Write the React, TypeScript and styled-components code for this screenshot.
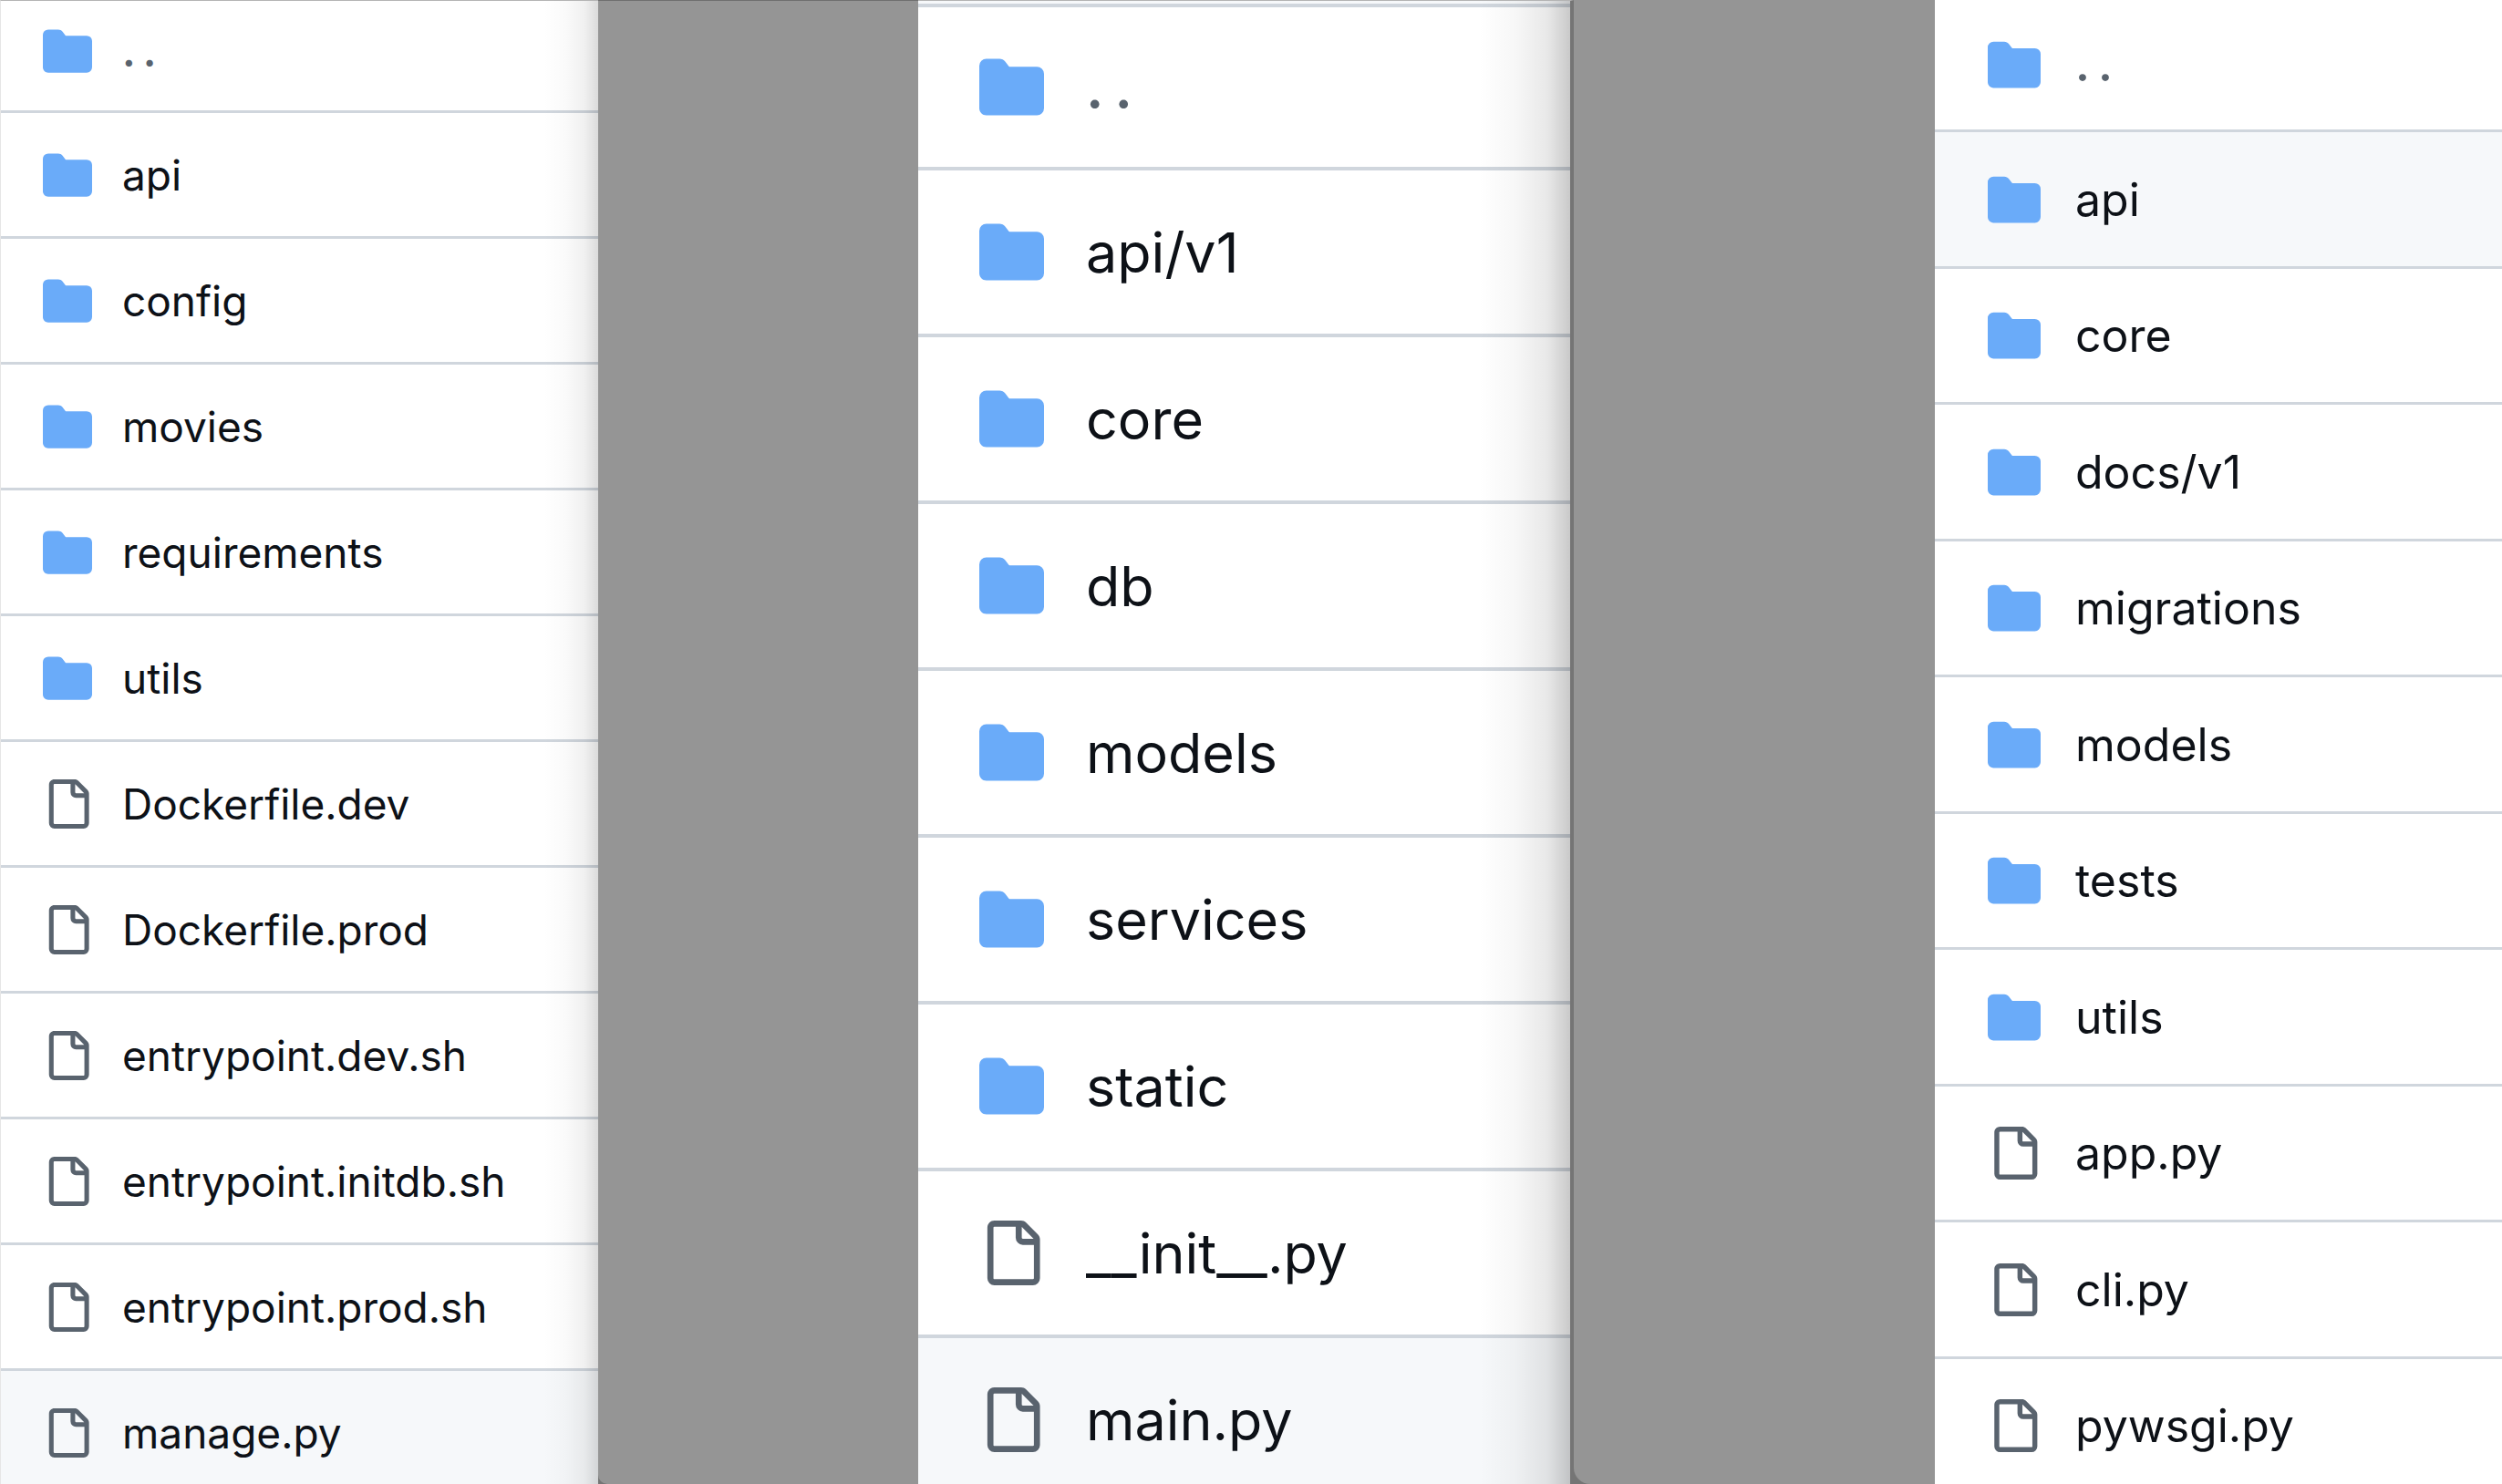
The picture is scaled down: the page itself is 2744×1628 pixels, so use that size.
import React from 'react';
import styled, { createGlobalStyle, css } from 'styled-components';

const GlobalStyle = createGlobalStyle`
  *, *::before, *::after { box-sizing: border-box; }
  body {
    margin: 0;
    background: #959595;
    font-family: Inter, "Liberation Sans", sans-serif;
    overflow: hidden;
  }
`;

type Size = 'small' | 'medium' | 'large';

const sizes = {
  small: { font: 46, line: 3, icon: 54, inset: 46, gap: 33, row: 138, evenRow: 138, first: 123, firstPad: 10, dots: 8 },
  medium: { font: 50, line: 3, icon: 58, inset: 58, gap: 38, row: 149, evenRow: 150, first: 145, firstPad: 0, dots: 9 },
  large: { font: 61, line: 4, icon: 71, inset: 67, gap: 46, row: 183, evenRow: 183, first: 179, firstPad: 0, dots: 12 },
};

const Board = styled.main`
  display: grid;
  grid-template-columns: 656fr 351fr 719fr 396fr 622fr;
  height: 100vh;
  overflow: hidden;
  background: #757575;
`;

const Panel = styled.section<{ $shade: 'none' | 'soft' | 'deep' }>`
  min-width: 0;
  overflow: hidden;
  background: #ffffff;
  position: relative;

  ${({ $shade }) =>
    $shade !== 'none' &&
    css`
      border-top: 1px solid #b4b4b4;
      &::after {
        content: '';
        position: absolute;
        inset: 0 0 0 auto;
        pointer-events: none;
        width: ${$shade === 'deep' ? 100 : 60}px;
        background: ${$shade === 'deep'
          ? 'linear-gradient(to right, rgba(0,0,0,0), rgba(0,0,0,0.03) 40%, rgba(0,0,0,0.09) 75%, rgba(0,0,0,0.21))'
          : 'linear-gradient(to right, rgba(0,0,0,0), rgba(0,0,0,0.02) 40%, rgba(0,0,0,0.06) 75%, rgba(0,0,0,0.14))'};
      }
    `}
  ${({ $shade }) => $shade === 'soft' && css`border-left: 1px solid #e6e6e6;`}
  ${({ $shade }) => $shade === 'deep' && css`border-right: 4px solid #757575;`}
`;

const Gap = styled.div<{ $topLine?: boolean }>`
  background: #959595;
  border-top: ${({ $topLine }) => ($topLine ? '1px solid #6f6f6f' : '0')};
  border-bottom-left-radius: ${({ $topLine }) => ($topLine ? 10 : 18)}px;
`;

const HeaderEdge = styled.div`
  height: 7px;
  background: #f6f8fa;
  border-bottom: 4px solid #d0d6dd;
`;

const List = styled.ul`
  list-style: none;
  margin: 0;
  padding: 0;
`;

const Row = styled.li<{ $size: Size; $active?: boolean }>`
  ${({ $size, $active }) => {
    const s = sizes[$size];
    return css`
      height: ${s.row}px;
      border-bottom: ${s.line}px solid #d0d6dd;
      background: ${$active ? '#f6f8fa' : 'transparent'};
      &:nth-child(even) { height: ${s.evenRow}px; }
      &:first-child { height: ${s.first}px; padding-bottom: ${s.firstPad}px; }
    `;
  }}
`;

const Entry = styled.a<{ $size: Size }>`
  display: flex;
  align-items: center;
  height: 100%;
  color: #0d1117;
  text-decoration: none;
  white-space: nowrap;
  padding-left: ${({ $size }) => sizes[$size].inset}px;
  gap: ${({ $size }) => sizes[$size].gap}px;
  font-size: ${({ $size }) => sizes[$size].font}px;
`;

const Icon = styled.svg<{ $size: Size; $color: string }>`
  flex: none;
  width: ${({ $size }) => sizes[$size].icon}px;
  height: ${({ $size }) => sizes[$size].icon}px;
  fill: ${({ $color }) => $color};
`;

const Dots = styled.span<{ $size: Size }>`
  display: flex;
  gap: ${({ $size }) => sizes[$size].dots}px;
  color: #59636e;
  font-weight: 600;
`;

const FolderIcon = ({ size }: { size: Size }) => (
  <Icon $size={size} $color="#6aabf9" viewBox="0 0 16 16" aria-hidden="true">
    <path d="M1.75 1A1.75 1.75 0 0 0 0 2.75v10.5C0 14.216.784 15 1.75 15h12.5A1.75 1.75 0 0 0 16 13.25v-8.5A1.75 1.75 0 0 0 14.25 3H7.5a.25.25 0 0 1-.2-.1l-.9-1.2C6.07 1.26 5.55 1 5 1H1.75Z" />
  </Icon>
);

const FileIcon = ({ size }: { size: Size }) => (
  <Icon $size={size} $color="#59636e" viewBox="0 0 16 16" aria-hidden="true">
    <path d="M2 1.75C2 .784 2.784 0 3.75 0h6.586c.464 0 .909.184 1.237.513l2.914 2.914c.329.328.513.773.513 1.237v9.586A1.75 1.75 0 0 1 13.25 16h-9.5A1.75 1.75 0 0 1 2 14.25Zm1.75-.25a.25.25 0 0 0-.25.25v12.5c0 .138.112.25.25.25h9.5a.25.25 0 0 0 .25-.25V6h-2.75A1.75 1.75 0 0 1 9 4.25V1.5Zm6.75.062V4.25c0 .138.112.25.25.25h2.688l-.011-.013-2.914-2.914-.013-.011Z" />
  </Icon>
);

interface TreeProps {
  size: Size;
  folders: string[];
  files: string[];
  active: string;
}

const Tree = ({ size, folders, files, active }: TreeProps) => (
  <List>
    <Row $size={size}>
      <Entry href="#" $size={size}>
        <FolderIcon size={size} />
        <Dots $size={size}><span>.</span><span>.</span></Dots>
      </Entry>
    </Row>
    {folders.map((name) => (
      <Row key={name} $size={size} $active={name === active}>
        <Entry href="#" $size={size}>
          <FolderIcon size={size} />
          <span>{name}</span>
        </Entry>
      </Row>
    ))}
    {files.map((name) => (
      <Row key={name} $size={size} $active={name === active}>
        <Entry href="#" $size={size}>
          <FileIcon size={size} />
          <span>{name}</span>
        </Entry>
      </Row>
    ))}
  </List>
);

export default function App() {
  return (
    <>
      <GlobalStyle />
      <Board>
        <Panel $shade="soft">
          <Tree
            size="small"
            folders={['api', 'config', 'movies', 'requirements', 'utils']}
            files={['Dockerfile.dev', 'Dockerfile.prod', 'entrypoint.dev.sh', 'entrypoint.initdb.sh', 'entrypoint.prod.sh', 'manage.py']}
            active="manage.py"
          />
        </Panel>
        <Gap $topLine />
        <Panel $shade="deep">
          <HeaderEdge />
          <Tree
            size="large"
            folders={['api/v1', 'core', 'db', 'models', 'services', 'static']}
            files={['__init__.py', 'main.py']}
            active="main.py"
          />
        </Panel>
        <Gap />
        <Panel $shade="none">
          <Tree
            size="medium"
            folders={['api', 'core', 'docs/v1', 'migrations', 'models', 'tests', 'utils']}
            files={['app.py', 'cli.py', 'pywsgi.py']}
            active="api"
          />
        </Panel>
      </Board>
    </>
  );
}
